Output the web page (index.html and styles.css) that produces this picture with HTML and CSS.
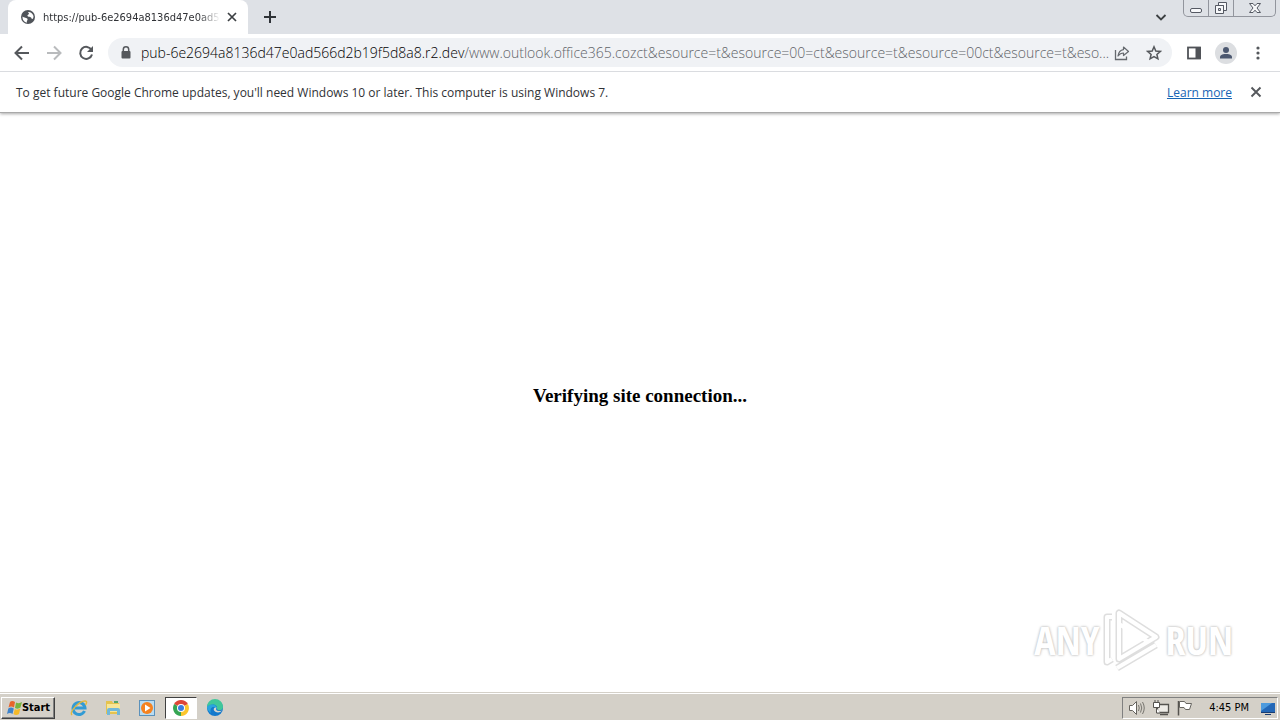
FILE: index.html
```html
<!DOCTYPE html>
<html lang="en">
<head>
<meta charset="utf-8">
<title>Verifying site connection</title>
<link rel="stylesheet" href="styles.css">
</head>
<body>
<header class="browser">
  <div class="tabstrip">
    <div class="tab">
      <svg class="favicon" width="16" height="16" viewBox="0 0 16 16"><circle cx="8" cy="8" r="7" fill="#50545a"/><path d="M2.500 7.500C4 9 7 8.500 7.500 10C8 11.500 6.500 11 7 13.500C4.500 13.500 2.300 11 2.500 7.500ZM8 3C9.500 2.500 12.500 3.500 13.500 7C13.500 9.500 12.500 10.500 11.500 9.500C11.500 7.500 9 8.500 7.500 7C7 5.500 9 6 9 4.500Z" fill="#fff"/></svg>
      <span class="tab-title">https://pub-6e2694a8136d47e0ad5</span>
      <button class="icon-btn" aria-label="Close tab"><svg width="16" height="16" viewBox="0 0 16 16"><path d="M4 4L12 12M12 4L4 12" stroke="#3c4043" stroke-width="1.700"/></svg></button>
    </div>
    <button class="icon-btn new-tab" aria-label="New tab"><svg width="16" height="16" viewBox="0 0 16 16"><path d="M8 2V14M2 8H14" stroke="#2f3338" stroke-width="2"/></svg></button>
    <button class="icon-btn tab-search" aria-label="Search tabs"><svg width="16" height="16" viewBox="0 0 16 16"><path d="M3.500 6L8 10.500L12.500 6" fill="none" stroke="#3c4043" stroke-width="1.800"/></svg></button>
    <div class="window-controls">
      <button class="win-btn" aria-label="Minimize"><svg width="14" height="14" viewBox="0 0 14 14"><rect x="1.500" y="7.500" width="11" height="4" rx="1.500" fill="#f7f8fa" stroke="#555963"/></svg></button>
      <button class="win-btn" aria-label="Restore"><svg width="14" height="14" viewBox="0 0 14 14"><path d="M4.500 1.500H12.500V9.500H9.500V4.500H4.500Z" fill="#f7f8fa" stroke="#555963"/><path d="M1.500 4.500H9.500V12.500H1.500Z" fill="#f7f8fa" stroke="#555963"/><path d="M4.500 7.500H6.500V9.500H4.500Z" fill="#dee1e6" stroke="#555963"/></svg></button>
      <button class="win-btn win-close" aria-label="Close"><svg width="14" height="14" viewBox="0 0 14 14"><path d="M1.500 2.500H5L7 4.800L9 2.500H12.500L9 7L12.500 11.500H9L7 9.200L5 11.500H1.500L5 7Z" fill="#f7f8fa" stroke="#555963"/></svg></button>
    </div>
  </div>
  <nav class="toolbar">
    <button class="icon-btn" aria-label="Back"><svg width="16" height="16" viewBox="0 0 16 16"><path d="M15 8H2M8 1.500L1.500 8L8 14.500" fill="none" stroke="#55585c" stroke-width="2"/></svg></button>
    <button class="icon-btn" aria-label="Forward"><svg width="16" height="16" viewBox="0 0 16 16"><path d="M1 8H14M8 1.500L14.500 8L8 14.500" fill="none" stroke="#b9bbbd" stroke-width="2"/></svg></button>
    <button class="icon-btn" aria-label="Reload"><svg width="16" height="16" viewBox="0 0 16 16"><path d="M13.500 5A6 6 0 1 0 14 9.500" fill="none" stroke="#55585c" stroke-width="2"/><path d="M15 1V7H9Z" fill="#55585c"/></svg></button>
    <div class="omnibox">
      <svg width="16" height="16" viewBox="0 0 16 16"><path d="M5.300 7V4.500A2.700 2.700 0 0 1 10.700 4.500V7" fill="none" stroke="#55585c" stroke-width="1.500"/><rect x="3.500" y="6" width="9" height="7.500" rx="1" fill="#55585c"/></svg>
      <span class="url"><span class="host">pub-6e2694a8136d47e0ad566d2b19f5d8a8.r2.dev</span>/www.outlook.office365.cozct&amp;esource=t&amp;esource=00=ct&amp;esource=t&amp;esource=00ct&amp;esource=t&amp;eso...</span>
      <button class="icon-btn" aria-label="Share"><svg width="16" height="16" viewBox="0 0 16 16"><path d="M1.500 5V14.500H12.500V11.500" fill="none" stroke="#65696e" stroke-width="1.300"/><path d="M9.500 2L14.500 6.500L9.500 10.500V8C7 8 5.500 9 4 11C4.500 7.500 6.500 5 9.500 4.600Z" fill="none" stroke="#65696e" stroke-width="1.200" stroke-linejoin="round"/></svg></button>
      <button class="icon-btn" aria-label="Bookmark"><svg width="16" height="16" viewBox="0 0 16 16"><path d="M8 1.800L9.800 6L14.300 6.400L10.900 9.400L11.900 13.800L8 11.500L4.100 13.800L5.100 9.400L1.700 6.400L6.200 6Z" fill="none" stroke="#55585c" stroke-width="1.500"/></svg></button>
    </div>
    <button class="icon-btn" aria-label="Side panel"><svg width="16" height="16" viewBox="0 0 16 16"><rect x="2" y="2.500" width="12" height="11" fill="none" stroke="#505358" stroke-width="1.800"/><path d="M9.500 2H15V14H9.500Z" fill="#505358"/></svg></button>
    <button class="icon-btn profile" aria-label="Profile"><svg width="22" height="22" viewBox="0 0 22 22"><circle cx="11" cy="11" r="11" fill="#dcdee1"/><circle cx="11" cy="8" r="3" fill="#4c5870"/><path d="M5 16.500V15C5 12.500 9 12 11 12S17 12.500 17 15V16.500Z" fill="#4c5870"/></svg></button>
    <button class="icon-btn" aria-label="Menu"><svg width="16" height="16" viewBox="0 0 16 16"><g fill="#55585c"><circle cx="8" cy="3" r="1.600"/><circle cx="8" cy="8" r="1.600"/><circle cx="8" cy="13" r="1.600"/></g></svg></button>
  </nav>
  <div class="infobar">
    <span class="info-text">To get future Google Chrome updates, you'll need Windows 10 or later. This computer is using Windows 7.</span>
    <a class="learn" href="#">Learn more</a>
    <button class="icon-btn" aria-label="Dismiss"><svg width="16" height="16" viewBox="0 0 16 16"><path d="M3.500 3.500L12.500 12.500M12.500 3.500L3.500 12.500" stroke="#55585c" stroke-width="1.900"/></svg></button>
  </div>
</header>
<main class="page">
  <h3 class="message">Verifying site connection...</h3>
  <div class="watermark">
    <span class="brand">ANY</span>
    <svg class="brand-logo" width="60" height="64" viewBox="0 0 60 64"><g fill="none" stroke="#dedede" stroke-width="7" stroke-linejoin="round"><path d="M10 9H5V54L10 51M17 5V51L54 29ZM15 60L54 37"/></g><g fill="none" stroke="#fff" stroke-width="4" stroke-linejoin="round"><path d="M10 9H5V54L10 51M17 5V51L54 29ZM17 16L45 33M15 60L54 37"/></g></svg>
    <span class="brand">RUN</span>
  </div>
</main>
<footer class="taskbar">
  <button class="start"><svg width="16" height="16" viewBox="0 0 16 16"><path d="M4 2Q6 0 9 2L8 7.500Q5 5.500 2.500 7.500Z" fill="#e7642b"/><path d="M10 2.500Q13 4 16 2L14.500 7.500Q12 9.500 9 8Z" fill="#77b43f"/><path d="M2.300 8.500Q5 6.500 7.800 8.500L6.500 14Q4 12 1 14Z" fill="#3e83ca"/><path d="M8.800 9Q11 10.500 14.300 8.500L13 14Q10 16 7.500 14Z" fill="#f4b928"/></svg>Start</button>
  <div class="launchers">
    <button class="launch" aria-label="Internet Explorer"><svg width="18" height="18" viewBox="0 0 18 18"><path d="M14.500 12A6 6 0 1 1 15 9H5" fill="none" stroke="#329bd4" stroke-width="3"/><path d="M2 16C-1 13 9 2 15 2C18 2 16 5 15.500 6" fill="none" stroke="#e2b83d" stroke-width="1.400"/></svg></button>
    <button class="launch" aria-label="File Explorer"><svg width="18" height="18" viewBox="0 0 18 18"><path d="M2 2H8L9 4H15V15H2Z" fill="#e5c34f"/><path d="M3 5H16V13H3Z" fill="#f8e697"/><path d="M3 16V11Q3 9 5 9H14Q16 9 16 11V16H13V12H6V16Z" fill="#72b8d9"/><path d="M10 3H14" stroke="#55a66b" stroke-width="2"/></svg></button>
    <button class="launch" aria-label="Media Player"><svg width="18" height="18" viewBox="0 0 18 18"><rect x="1.500" y="1.500" width="15" height="15" fill="#b9dcf2" stroke="#5b91bb"/><circle cx="9" cy="9" r="6" fill="#f58220"/><path d="M7 5.500L12.500 9L7 12.500Z" fill="#fff"/></svg></button>
    <button class="launch active" aria-label="Chrome"><svg width="18" height="18" viewBox="0 0 18 18"><path d="M9 9L2.100 5A8 8 0 0 1 15.900 5Z" fill="#de4637"/><path d="M9 9L15.900 5A8 8 0 0 1 9 17Z" fill="#fbc62d"/><path d="M9 9V17A8 8 0 0 1 2.100 5Z" fill="#35a553"/><circle cx="9" cy="9" r="4" fill="#fff"/><circle cx="9" cy="9" r="3" fill="#3b7de0"/></svg></button>
    <button class="launch" aria-label="Edge"><svg width="18" height="18" viewBox="0 0 18 18"><circle cx="9" cy="9" r="8" fill="#1479cc"/><path d="M1 8A8 8 0 0 1 17 8C17 12 12 12 11 10C12 5 5 4 1 8Z" fill="#40c79a"/><path d="M1 8C5 3 12 6 10.500 10C8 6 3 8 5 14C2 12 1 10 1 8Z" fill="#2aa5df"/><path d="M10.500 8.500C9 11 11 13 16 11.500C14 14 10 14 8 11.500C7 9 9 8 10.500 8.500Z" fill="#d8d5cd"/></svg></button>
  </div>
  <div class="tray">
    <svg width="18" height="18" viewBox="0 0 18 18"><path d="M1.500 6.500H4.500L8.500 2.500V15.500L4.500 11.500H1.500Z" fill="#fff" stroke="#66645f"/><path d="M10.500 6Q12 9 10.500 12M12.500 4.500Q15 9 12.500 13.500M14.500 3Q18 9 14.500 15" fill="none" stroke="#77756f"/></svg>
    <svg width="18" height="18" viewBox="0 0 18 18"><path d="M5.500 5.500H16.500V13.500H5.500ZM8 15.500H16" fill="#eeece7" stroke="#55534f" stroke-width="1.300"/><path d="M1.500 3.500H7.500V8.500H1.500ZM3 1V3M6 1V3M4.500 9V14H8" fill="#fff" stroke="#55534f"/></svg>
    <svg width="18" height="18" viewBox="0 0 18 18"><path d="M2.500 2V16.500" stroke="#55534f" stroke-width="1.500"/><path d="M3.500 2.500H8.500L10 4.500H15.500L13.500 10.500H9.500L8 8.500H3.500Z" fill="#fff" stroke="#66645f"/></svg>
    <time class="clock">4:45 PM</time>
    <svg width="18" height="18" viewBox="0 0 18 18"><path d="M2 4H16V13H2Z" fill="#2468b7"/><path d="M2 4H13L2 12Z" fill="#4e9bdd"/><path d="M2 13.500H16M6 15.500H12" stroke="#193d72"/></svg>
  </div>
</footer>
</body>
</html>
```
FILE: styles.css
```css
* { box-sizing: border-box; }
body {
  margin: 0;
  min-height: 100vh;
  display: flex;
  flex-direction: column;
  background: #fff;
  font-family: "Open Sans", "Noto Sans", sans-serif;
  color: #303236;
}
svg { display: block; flex: none; }
button { font: inherit; color: inherit; }
.icon-btn { border: 0; padding: 0; background: none; flex: none; }
.browser { border-bottom: 1px solid #a9a9a9; box-shadow: 0 1px 3px #a9a9a9; }
.tabstrip {
  display: flex;
  align-items: center;
  height: 34px;
  padding-left: 8px;
  background: #dee1e6;
}
.tab {
  display: flex;
  align-items: center;
  gap: 6px;
  width: 240px;
  height: 34px;
  padding: 0 8px 0 12px;
  background: #fff;
  border-radius: 8px 8px 0 0;
}
.favicon { margin-right: 1px; }
.tab-title {
  flex: 1;
  margin-right: -2px;
  overflow: hidden;
  white-space: nowrap;
  font-family: "DejaVu Sans Condensed", "Open Sans", sans-serif;
  font-size: 11px;
  mask-image: linear-gradient(to right, #000 88%, transparent);
}
.new-tab { margin-left: 14px; }
.tab-search { margin-left: auto; margin-right: 14px; }
.window-controls {
  display: flex;
  align-self: flex-start;
  height: 17px;
  margin-right: 4px;
  border: 1px solid #92959d;
  border-top: 0;
  border-radius: 0 0 5px 5px;
}
.win-btn {
  display: flex;
  align-items: center;
  justify-content: center;
  width: 25px;
  padding: 0;
  border: 0;
  border-right: 1px solid #92959d;
  background: none;
}
.win-close { width: 41px; border-right: 0; }
.toolbar {
  display: flex;
  align-items: center;
  gap: 16px;
  height: 38px;
  padding: 0 14px;
  border-bottom: 1px solid #dadce0;
}
.omnibox {
  flex: 1;
  min-width: 0;
  display: flex;
  align-items: center;
  gap: 16px;
  height: 29px;
  margin-left: -2px;
  margin-right: -2px;
  padding: 0 10px;
  border-radius: 15px;
  background: #f0f2f5;
}
.url {
  flex: 1;
  margin-left: -9px;
  margin-right: -14px;
  overflow: hidden;
  white-space: nowrap;
  font-size: 14px;
  font-weight: 300;
  color: #5f6368;
}
.host { color: #000; }
.profile { margin: 0 -3px; }
.infobar {
  display: flex;
  align-items: center;
  height: 40px;
  padding: 0 16px;
  font-size: 12px;
}
.info-text { flex: 1; }
.learn { margin-right: 16px; color: #1765b5; }
.page {
  flex: 1;
  display: grid;
  grid-template-rows: 1fr auto 1fr;
  padding-bottom: 14px;
}
.message {
  grid-row: 2;
  margin: 0;
  text-align: center;
  font-family: "Liberation Serif", serif;
  font-size: 19px;
  line-height: 22px;
  color: #000;
}
.watermark {
  grid-row: 3;
  justify-self: end;
  align-self: end;
  display: flex;
  align-items: center;
  gap: 3px;
  margin: 0 47px 6px 0;
}
.brand {
  font-family: "Liberation Sans Narrow", "Open Sans Condensed", "DejaVu Sans Condensed", sans-serif;
  font-size: 40px;
  line-height: 40px;
  color: #fff;
  text-shadow: 0 0 3px #bbb, 0 0 2px #ccc;
}
.taskbar {
  display: flex;
  align-items: center;
  height: 28px;
  padding: 2px 2px 0 1px;
  background: #d4d0c8;
  border-top: 1px solid #d4d0c8;
  box-shadow: inset 0 1px #fff;
}
.start {
  display: flex;
  align-items: center;
  justify-content: center;
  width: 54px;
  height: 22px;
  padding: 0;
  border: 1px solid;
  border-color: #fff #404040 #404040 #fff;
  box-shadow: inset -1px -1px #808080;
  background: #d4d0c8;
  color: #000;
  font-family: "DejaVu Sans Condensed", "DejaVu Sans", sans-serif;
  font-size: 11px;
  font-weight: 700;
}
.launchers { display: flex; gap: 2px; margin-left: 8px; }
.launch {
  display: flex;
  align-items: center;
  justify-content: center;
  width: 32px;
  height: 22px;
  padding: 0;
  border: 1px solid transparent;
  background: none;
}
.active {
  background: #fff;
  border-color: #404040 #fff #fff #404040;
}
.tray {
  display: flex;
  align-items: center;
  gap: 6px;
  height: 22px;
  margin-left: auto;
  padding: 0 0 0 5px;
  border: 1px solid;
  border-color: #808080 #fff #fff #808080;
}
.clock {
  margin: 0 4px 0 9px;
  font-family: "DejaVu Sans Condensed", sans-serif;
  font-size: 11px;
  color: #000;
}
```
